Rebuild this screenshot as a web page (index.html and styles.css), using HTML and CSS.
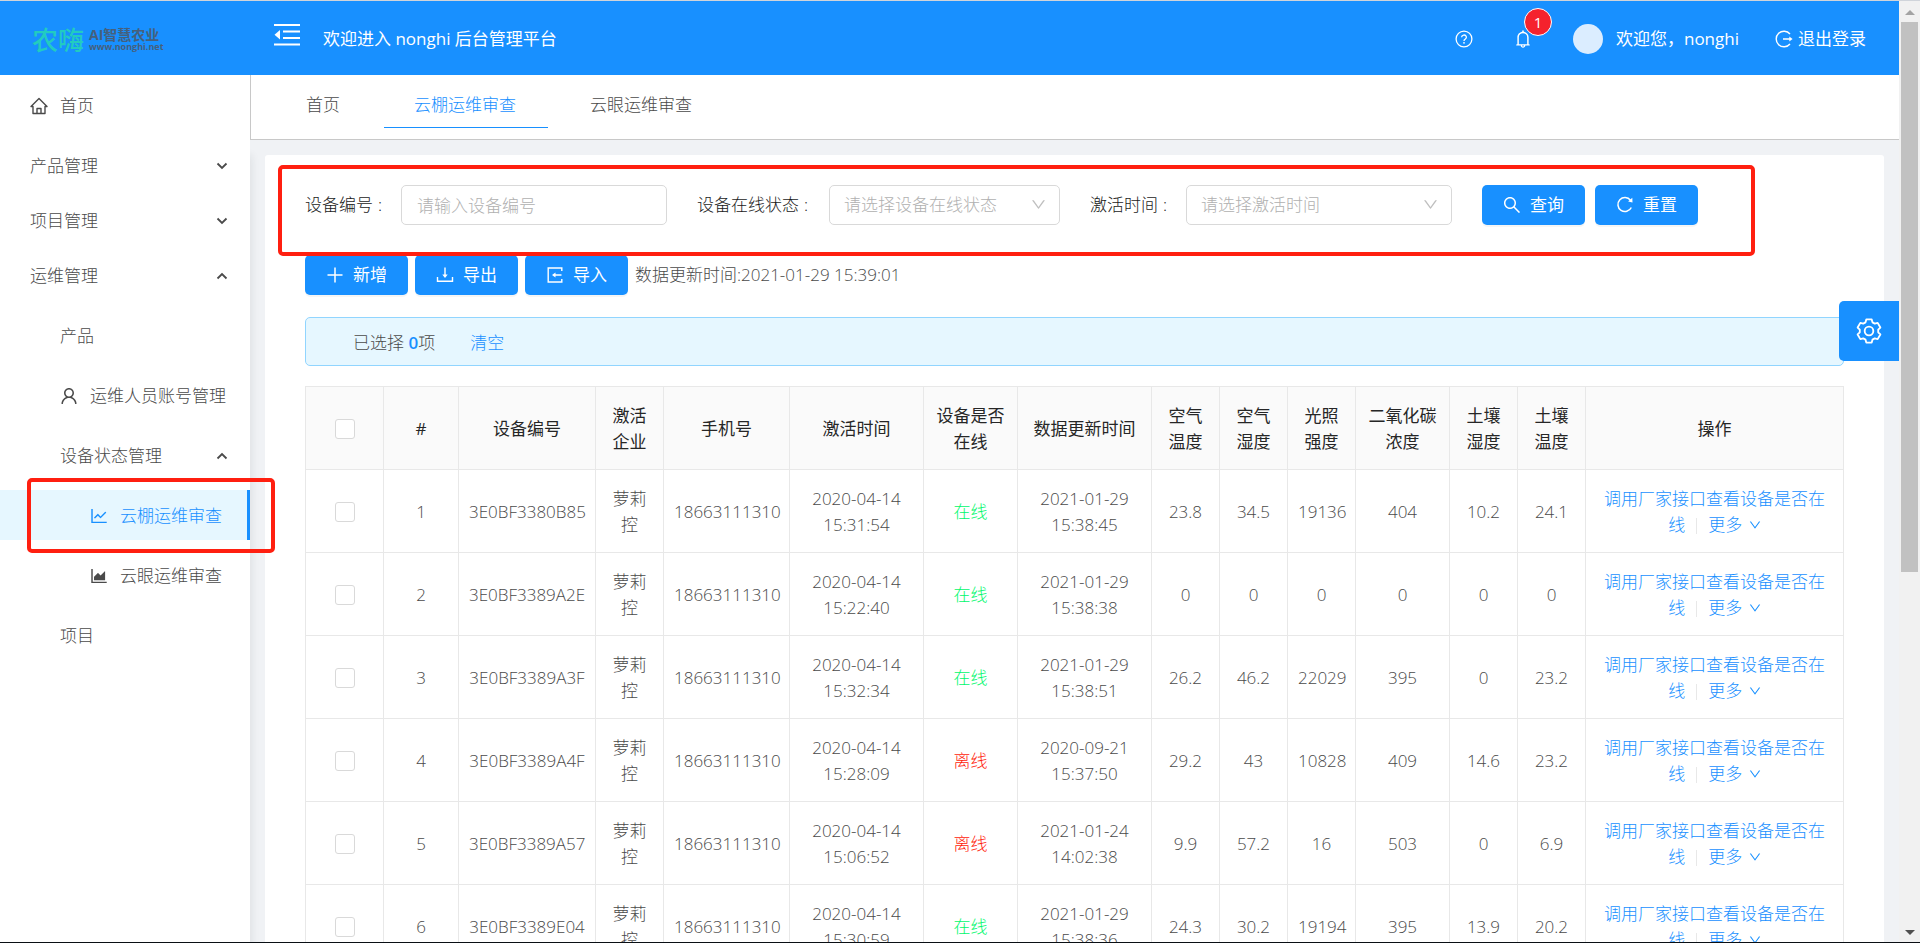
FILE: index.html
```html
<!DOCTYPE html>
<html lang="zh-CN">
<head>
  <meta charset="UTF-8" />
  <meta name="viewport" content="width=device-width, initial-scale=1.0">
  <title>云棚运维审查</title>
  <link rel="stylesheet" href="styles.css">
</head>
<body>
  <!-- 图标 -->
  <svg class="icon-defs" aria-hidden="true">
    <symbol id="i-down" viewBox="64 64 896 896"><path fill="currentColor" d="M884 256h-75c-5.100 0-9.900 2.500-12.900 6.600L512 654.200 227.900 262.600c-3-4.100-7.800-6.600-12.900-6.600h-75c-6.500 0-10.300 7.400-6.500 12.700l352.600 486.100c12.800 17.600 39 17.600 51.700 0l352.600-486.100c3.900-5.300.1-12.700-6.400-12.700z"/></symbol>
    <symbol id="i-arrow" viewBox="0 0 12 12"><path fill="none" stroke="currentColor" stroke-width="1.800" d="M1.500 3.500 6 8l4.500-4.500"/></symbol>
    <symbol id="i-home" viewBox="0 0 18 18"><path fill="none" stroke="currentColor" stroke-width="1.400" stroke-linejoin="round" d="M1 9.500 9 1.500l8 8h-2V16.500H3V9.500zM7 16.500v-5h4v5"/></symbol>
    <symbol id="i-user" viewBox="64 64 896 896"><path fill="currentColor" d="M858.500 763.600a374 374 0 0 0-80.600-119.500 375.630 375.630 0 0 0-119.500-80.600c-.4-.2-.8-.3-1.200-.5C719.500 518 760 444.700 760 362c0-137-111-248-248-248S264 225 264 362c0 82.700 40.500 156 102.800 201.100-.4.2-.8.3-1.200.5-44.800 18.900-85 46-119.500 80.600a375.630 375.630 0 0 0-80.600 119.500A371.700 371.700 0 0 0 136 901.800a8 8 0 0 0 8 8.200h60c4.400 0 7.900-3.500 8-7.800 2-77.200 33-149.500 87.800-204.300 56.700-56.700 132-87.900 212.200-87.900s155.500 31.200 212.200 87.900C779 752.700 810 825 812 902.200c.1 4.400 3.600 7.800 8 7.800h60a8 8 0 0 0 8-8.200c-1-47.800-10.900-94.300-29.500-138.200zM512 534c-45.900 0-89.100-17.900-121.600-50.400S340 407.900 340 362c0-45.900 17.900-89.100 50.400-121.600S466.100 190 512 190s89.100 17.900 121.600 50.400S684 316.100 684 362c0 45.900-17.900 89.100-50.400 121.600S557.900 534 512 534z"/></symbol>
    <symbol id="i-line" viewBox="64 64 896 896"><path fill="currentColor" d="M888 792H200V168c0-4.400-3.600-8-8-8h-56c-4.400 0-8 3.600-8 8v688c0 4.400 3.600 8 8 8h752c4.400 0 8-3.600 8-8v-56c0-4.400-3.600-8-8-8zM305.800 637.700c3.100 3.100 8.100 3.100 11.300 0l138.300-137.600L583 628.500c3.100 3.100 8.200 3.100 11.300 0l275.400-275.300c3.100-3.100 3.100-8.200 0-11.300l-39.600-39.600a8.030 8.030 0 0 0-11.300 0l-230 229.900L461.400 404a8.030 8.030 0 0 0-11.300 0L266.300 586.700a8.030 8.030 0 0 0 0 11.300l39.500 39.700z"/></symbol>
    <symbol id="i-area" viewBox="64 64 896 896"><path fill="currentColor" d="M888 792H200V168c0-4.400-3.600-8-8-8h-56c-4.400 0-8 3.600-8 8v688c0 4.400 3.600 8 8 8h752c4.400 0 8-3.600 8-8v-56c0-4.400-3.600-8-8-8zm-616-64h536c4.400 0 8-3.600 8-8V284c0-7.200-8.700-10.700-13.700-5.700L592 488.600l-125.400-124a8.030 8.030 0 0 0-11.300 0l-189 189.600a7.870 7.870 0 0 0-2.300 5.600V720c0 4.400 3.600 8 8 8z"/></symbol>
    <symbol id="i-search" viewBox="64 64 896 896"><path fill="currentColor" d="M909.600 854.500L649.900 594.800C690.200 542.700 712 479 712 412c0-80.200-31.300-155.400-87.900-212.100-56.600-56.700-132-87.900-212.100-87.900s-155.500 31.300-212.100 87.900C143.200 256.500 112 331.800 112 412c0 80.100 31.300 155.500 87.900 212.100C256.500 680.800 331.800 712 412 712c67 0 130.600-21.800 182.700-62l259.700 259.600a8.200 8.200 0 0 0 11.600 0l43.600-43.500a8.200 8.200 0 0 0 0-11.600zM570.400 570.400C528 612.700 471.800 636 412 636s-116-23.300-158.400-65.600C211.300 528 188 471.800 188 412s23.300-116.100 65.600-158.400C296 211.300 352.200 188 412 188s116.100 23.200 158.400 65.600S636 352.200 636 412s-23.300 116.100-65.600 158.400z"/></symbol>
    <symbol id="i-bell" viewBox="64 64 896 896"><path fill="currentColor" d="M816 768h-24V428c0-141.100-104.300-257.700-240-277.100V112c0-22.100-17.900-40-40-40s-40 17.900-40 40v38.900c-135.700 19.400-240 136-240 277.100v340h-24c-17.700 0-32 14.300-32 32v32c0 4.400 3.600 8 8 8h216c0 61.800 50.200 112 112 112s112-50.200 112-112h216c4.400 0 8-3.600 8-8v-32c0-17.700-14.300-32-32-32zM512 888c-26.500 0-48-21.500-48-48h96c0 26.500-21.500 48-48 48zM304 768V428c0-55.600 21.600-107.800 60.900-147.100S456.400 220 512 220c55.600 0 107.800 21.600 147.100 60.900S720 372.400 720 428v340H304z"/></symbol>
    <symbol id="i-reload" viewBox="0 0 18 18"><path fill="none" stroke="currentColor" stroke-width="1.500" d="M15.300 11.500A7 7 0 1 1 14.500 4.300"/><path fill="currentColor" d="m16.300 1.800.2 4.700-4.400-1z"/></symbol>
    <symbol id="i-plus" viewBox="0 0 18 18"><path fill="none" stroke="currentColor" stroke-width="1.500" d="M9 1.500v15M1.500 9h15"/></symbol>
    <symbol id="i-export" viewBox="0 0 18 18"><path fill="none" stroke="currentColor" stroke-width="1.400" d="M9 1.500V10M1.500 11v4.300h15V11"/><path fill="currentColor" d="M6.300 8.500h5.400L9 12z"/></symbol>
    <symbol id="i-import" viewBox="0 0 18 18"><path fill="none" stroke="currentColor" stroke-width="1.400" d="M15.800 5V2H2.200v14h13.600v-3M8.500 9h7"/><path fill="currentColor" d="M9.500 6.400v5.200L6 9z"/></symbol>
    <symbol id="i-help" viewBox="0 0 18 18"><circle cx="9" cy="9" r="7.900" fill="none" stroke="currentColor" stroke-width="1.300"/><path fill="none" stroke="currentColor" stroke-width="1.300" d="M6.600 7.200a2.400 2.200 0 1 1 3.600 1.900C9.300 9.500 9 9.900 9 11"/><circle cx="9" cy="12.800" r=".9" fill="currentColor"/></symbol>
    <symbol id="i-logout" viewBox="0 0 18 18"><path fill="none" stroke="currentColor" stroke-width="1.400" d="M15 4a7.800 7.800 0 1 0 0 10M8 9h8"/><path fill="currentColor" d="M14.300 6.600v4.800L17.600 9z"/></symbol>
    <symbol id="i-fold" viewBox="0 0 26 22"><path fill="currentColor" d="M0 0h26v2H0zM9 6.500h17v2H9zM9 13h17v2H9zM0 19.500h26v2H0zM6 6v9.500L.5 10.800z"/></symbol>
    <symbol id="i-gear" viewBox="0 0 24 24"><path fill="none" stroke="currentColor" stroke-width="1.700" stroke-linejoin="round" d="M9.500 1.300h5L15.200 4l2.100 1.200 2.700-.7 2.500 4.300-2 2v2.400l2 2-2.500 4.300-2.700-.7-2.100 1.200-.7 2.700h-5L8.800 20l-2.100-1.200-2.700.7-2.500-4.300 2-2v-2.400l-2-2L4 4.500l2.700.7L8.800 4z"/><circle cx="12" cy="12" r="4" fill="none" stroke="currentColor" stroke-width="1.700"/></symbol>
  </svg>

  <div class="page">
    <header class="header">
      <a class="logo" href="#">
        <span class="logo-mark">农嗨</span>
        <span class="logo-text">
          <span class="logo-name">AI智慧农业</span>
          <span class="logo-site">www.nonghi.net</span>
        </span>
      </a>
      <button class="fold" type="button" aria-label="收起菜单"><svg><use href="#i-fold"/></svg></button>
      <span class="welcome">欢迎进入 nonghi 后台管理平台</span>
      <div class="user-area">
        <a class="help" href="#" aria-label="帮助"><svg class="icon"><use href="#i-help"/></svg></a>
        <a class="bell" href="#" aria-label="通知"><svg class="icon"><use href="#i-bell"/></svg><span class="badge">1</span></a>
        <a class="account" href="#"><span class="avatar"></span>欢迎您，nonghi</a>
        <a class="logout" href="#"><svg class="icon"><use href="#i-logout"/></svg>退出登录</a>
      </div>
    </header>

    <div class="body">
      <!-- 左侧菜单 -->
      <nav class="sidebar">
        <ul class="menu">
          <li><a class="menu-item" href="#"><svg class="icon"><use href="#i-home"/></svg>首页</a></li>
          <li><button class="menu-title" type="button">产品管理<svg class="arrow"><use href="#i-arrow"/></svg></button></li>
          <li><button class="menu-title" type="button">项目管理<svg class="arrow"><use href="#i-arrow"/></svg></button></li>
          <li>
            <button class="menu-title open" type="button">运维管理<svg class="arrow"><use href="#i-arrow"/></svg></button>
            <ul class="menu-sub">
              <li><a class="menu-item" href="#">产品</a></li>
              <li><a class="menu-item" href="#"><svg class="icon"><use href="#i-user"/></svg>运维人员账号管理</a></li>
              <li>
                <button class="menu-title open" type="button">设备状态管理<svg class="arrow"><use href="#i-arrow"/></svg></button>
                <ul class="menu-sub-2">
                  <li><a class="menu-item selected" href="#"><svg class="icon"><use href="#i-line"/></svg>云棚运维审查</a></li>
                  <li><a class="menu-item" href="#"><svg class="icon"><use href="#i-area"/></svg>云眼运维审查</a></li>
                </ul>
              </li>
              <li><a class="menu-item" href="#">项目</a></li>
            </ul>
          </li>
        </ul>
        <div class="mark mark-menu"></div>
      </nav>

      <main class="main">
        <div class="tabs">
          <a class="tab" href="#">首页</a>
          <a class="tab active" href="#">云棚运维审查</a>
          <a class="tab" href="#">云眼运维审查</a>
        </div>

        <div class="card">
          <!-- 查询条件 -->
          <form class="filters">
            <div class="field">
              <label for="deviceNo">设备编号<span class="colon">:</span></label>
              <input id="deviceNo" class="control" type="text" placeholder="请输入设备编号">
            </div>
            <div class="field">
              <label class="wide" for="online">设备在线状态<span class="colon">:</span></label>
              <div class="select-box narrow">
                <select id="online" class="control"><option>请选择设备在线状态</option></select>
                <svg><use href="#i-down"/></svg>
              </div>
            </div>
            <div class="field">
              <label for="activeTime">激活时间<span class="colon">:</span></label>
              <div class="select-box">
                <select id="activeTime" class="control"><option>请选择激活时间</option></select>
                <svg><use href="#i-down"/></svg>
              </div>
            </div>
            <div class="field-buttons">
              <button class="btn" type="button"><svg class="icon"><use href="#i-search"/></svg>查询</button>
              <button class="btn" type="button"><svg class="icon"><use href="#i-reload"/></svg>重置</button>
            </div>
            <div class="mark mark-filters"></div>
          </form>

          <div class="toolbar">
            <button class="btn" type="button"><svg class="icon"><use href="#i-plus"/></svg>新增</button>
            <button class="btn" type="button"><svg class="icon"><use href="#i-export"/></svg>导出</button>
            <button class="btn" type="button"><svg class="icon"><use href="#i-import"/></svg>导入</button>
            <span>数据更新时间:2021-01-29 15:39:01</span>
          </div>

          <div class="alert">
            <span>已选择 <b>0</b>项</span>
            <a href="#">清空</a>
          </div>

          <table class="table">
            <colgroup>
              <col class="c-check"><col class="c-index"><col class="c-no"><col class="c-small"><col class="c-phone">
              <col class="c-time"><col class="c-mid"><col class="c-time"><col class="c-small"><col class="c-small">
              <col class="c-small"><col class="c-mid"><col class="c-small"><col class="c-small"><col>
            </colgroup>
            <thead>
              <tr>
                <th><input type="checkbox" aria-label="全选"></th>
                <th>#</th>
                <th>设备编号</th>
                <th>激活企业</th>
                <th>手机号</th>
                <th>激活时间</th>
                <th>设备是否在线</th>
                <th>数据更新时间</th>
                <th>空气温度</th>
                <th>空气湿度</th>
                <th>光照强度</th>
                <th>二氧化碳浓度</th>
                <th>土壤湿度</th>
                <th>土壤温度</th>
                <th>操作</th>
              </tr>
            </thead>
            <tbody>
              <tr>
                <td><input type="checkbox" aria-label="选择 1"></td>
                <td>1</td><td>3E0BF3380B85</td><td>萝莉控</td><td>18663111310</td><td>2020-04-14 15:31:54</td>
                <td class="online">在线</td><td>2021-01-29 15:38:45</td>
                <td>23.8</td><td>34.5</td><td>19136</td><td>404</td><td>10.2</td><td>24.1</td>
                <td><a href="#">调用厂家接口查看设备是否在线</a><i class="divider"></i><a href="#">更多 <svg><use href="#i-down"/></svg></a></td>
              </tr>
              <tr>
                <td><input type="checkbox" aria-label="选择 2"></td>
                <td>2</td><td>3E0BF3389A2E</td><td>萝莉控</td><td>18663111310</td><td>2020-04-14 15:22:40</td>
                <td class="online">在线</td><td>2021-01-29 15:38:38</td>
                <td>0</td><td>0</td><td>0</td><td>0</td><td>0</td><td>0</td>
                <td><a href="#">调用厂家接口查看设备是否在线</a><i class="divider"></i><a href="#">更多 <svg><use href="#i-down"/></svg></a></td>
              </tr>
              <tr>
                <td><input type="checkbox" aria-label="选择 3"></td>
                <td>3</td><td>3E0BF3389A3F</td><td>萝莉控</td><td>18663111310</td><td>2020-04-14 15:32:34</td>
                <td class="online">在线</td><td>2021-01-29 15:38:51</td>
                <td>26.2</td><td>46.2</td><td>22029</td><td>395</td><td>0</td><td>23.2</td>
                <td><a href="#">调用厂家接口查看设备是否在线</a><i class="divider"></i><a href="#">更多 <svg><use href="#i-down"/></svg></a></td>
              </tr>
              <tr>
                <td><input type="checkbox" aria-label="选择 4"></td>
                <td>4</td><td>3E0BF3389A4F</td><td>萝莉控</td><td>18663111310</td><td>2020-04-14 15:28:09</td>
                <td class="offline">离线</td><td>2020-09-21 15:37:50</td>
                <td>29.2</td><td>43</td><td>10828</td><td>409</td><td>14.6</td><td>23.2</td>
                <td><a href="#">调用厂家接口查看设备是否在线</a><i class="divider"></i><a href="#">更多 <svg><use href="#i-down"/></svg></a></td>
              </tr>
              <tr>
                <td><input type="checkbox" aria-label="选择 5"></td>
                <td>5</td><td>3E0BF3389A57</td><td>萝莉控</td><td>18663111310</td><td>2020-04-14 15:06:52</td>
                <td class="offline">离线</td><td>2021-01-24 14:02:38</td>
                <td>9.9</td><td>57.2</td><td>16</td><td>503</td><td>0</td><td>6.9</td>
                <td><a href="#">调用厂家接口查看设备是否在线</a><i class="divider"></i><a href="#">更多 <svg><use href="#i-down"/></svg></a></td>
              </tr>
              <tr>
                <td><input type="checkbox" aria-label="选择 6"></td>
                <td>6</td><td>3E0BF3389E04</td><td>萝莉控</td><td>18663111310</td><td>2020-04-14 15:30:59</td>
                <td class="online">在线</td><td>2021-01-29 15:38:36</td>
                <td>24.3</td><td>30.2</td><td>19194</td><td>395</td><td>13.9</td><td>20.2</td>
                <td><a href="#">调用厂家接口查看设备是否在线</a><i class="divider"></i><a href="#">更多 <svg><use href="#i-down"/></svg></a></td>
              </tr>
            </tbody>
          </table>
        </div>
      </main>
    </div>

    <button class="setting" type="button" aria-label="设置"><svg><use href="#i-gear"/></svg></button>
  </div>

  <!-- 滚动条 -->
  <div class="scrollbar">
    <span class="scroll-up"></span>
    <div class="scroll-track"><div class="scroll-thumb"></div></div>
    <span class="scroll-down"></span>
  </div>
</body>
</html>
```

FILE: styles.css
```css
* {
  box-sizing: border-box;
}
body {
  margin: 0;
  height: 100vh;
  display: flex;
  overflow: hidden;
  border-top: 1px solid #d0d4da;
  border-bottom: 1px solid #0a0f14;
  color: #4a4a4a;
  font-family: "Open Sans", "Noto Sans CJK SC", sans-serif;
  font-size: 17px;
  font-weight: 300;
  line-height: 26px;
}
ul {
  margin: 0;
  padding: 0;
  list-style: none;
}
a {
  color: #1890ff;
  text-decoration: none;
}
button, input, select {
  font: inherit;
}
button {
  border: 0;
  cursor: pointer;
}
.icon-defs {
  position: absolute;
  width: 0;
  height: 0;
}
.icon {
  width: 18px;
  height: 18px;
  flex: none;
}
.page {
  position: relative;
  flex: 1;
  min-width: 0;
  display: flex;
  flex-direction: column;
}
/* 顶部 */
.header {
  flex: none;
  display: flex;
  align-items: center;
  height: 74px;
  padding: 2px 33px 0 0;
  background: #1890ff;
  color: #fff;
  font-weight: 400;
}
.header a {
  color: #fff;
}
.logo {
  display: flex;
  align-items: center;
  gap: 5px;
  width: 274px;
  padding: 2px 0 0 32px;
}
.logo .logo-mark {
  color: #22cbc0;
  font-size: 26px;
  font-weight: 500;
}
.logo-text {
  display: flex;
  flex-direction: column;
  color: #46607c;
  font-weight: 700;
}
.logo-name {
  font-size: 14px;
  line-height: 14px;
}
.logo-site {
  font-size: 9px;
  line-height: 10px;
}
.fold {
  padding: 0;
  margin-bottom: 8px;
  background: none;
  color: #fff;
}
.fold svg {
  display: block;
  width: 26px;
  height: 22px;
}
.welcome {
  margin-left: 23px;
}
.user-area {
  display: flex;
  align-items: center;
  margin-left: auto;
}
.user-area a {
  display: flex;
  align-items: center;
}
.bell {
  position: relative;
  margin-left: 41px;
}
.badge {
  position: absolute;
  left: 10px;
  top: -22px;
  width: 28px;
  height: 28px;
  border: 1px solid #fff;
  border-radius: 50%;
  background: #f5222d;
  font-size: 15px;
  text-align: center;
}
.account {
  margin-left: 41px;
  gap: 13px;
}
.avatar {
  width: 30px;
  height: 30px;
  border-radius: 50%;
  background: #dbedff;
}
.logout {
  margin-left: 36px;
  gap: 5px;
}
/* 左侧菜单 */
.body {
  flex: 1;
  min-height: 0;
  display: flex;
}
.sidebar {
  position: relative;
  z-index: 1;
  flex: none;
  width: 250px;
  background: #fff;
  box-shadow: 2px 80px 8px rgba(29, 35, 41, 0.08);
}
.menu {
  padding-top: 5px;
}
.menu > li:first-child > a {
  margin-top: 0;
}
.menu-item, .menu-title {
  display: flex;
  align-items: center;
  width: 100%;
  height: 50px;
  padding: 2px 22px 0 30px;
  color: #4a4a4a;
  white-space: nowrap;
}
.menu-item {
  gap: 12px;
  margin: 10px 0;
  padding-right: 0;
}
.menu-title {
  justify-content: space-between;
  margin: 5px 0;
  background: none;
}
.menu-sub .menu-item, .menu-sub .menu-title {
  padding-left: 60px;
}
.menu-sub-2 .menu-item.menu-item {
  padding-left: 90px;
}
.menu-item.selected {
  background: #e6f7ff;
  border-right: 3px solid #1890ff;
  color: #1890ff;
}
.arrow {
  width: 12px;
  height: 12px;
}
.open .arrow {
  transform: rotate(180deg);
}
/* 红色标注框 */
.mark {
  position: absolute;
  border: 4px solid #ff1f10;
  border-radius: 5px;
  pointer-events: none;
}
.mark-menu {
  left: 27px;
  right: -25px;
  top: 403px;
  height: 75px;
}
.mark-filters {
  left: -27px;
  top: -20px;
  width: 1477px;
  height: 91px;
}
/* 标签页 */
.main {
  flex: 1;
  min-width: 0;
  overflow: hidden;
  background: #f0f2f5;
}
.tabs {
  position: relative;
  z-index: 2;
  display: flex;
  gap: 12px;
  height: 65px;
  padding-left: 25px;
  border-left: 1px solid #c8c8c8;
  border-bottom: 1px solid #c8c8c8;
  background: #fff;
}
.tab {
  height: 53px;
  padding: 17px 32px 0 30px;
  color: #4a4a4a;
}
.tab.active {
  border-bottom: 1px solid #1890ff;
  color: #1890ff;
}
.card {
  margin: 15px 15px 0;
  padding: 30px 40px;
  border-radius: 3px;
  background: #fff;
}
/* 查询条件 */
.filters {
  position: relative;
  display: flex;
  gap: 30px;
}
.field {
  display: flex;
  align-items: center;
}
.field label {
  width: 96px;
  color: #1a1a1a;
  white-space: nowrap;
}
.field .wide {
  width: 132px;
}
.colon {
  margin-left: 5px;
}
.control {
  width: 266px;
  height: 40px;
  padding: 0 15px;
  border: 1px solid #d9d9d9;
  border-radius: 5px;
  background: #fff;
  color: #b0b0b0;
}
.control::placeholder {
  color: #b0b0b0;
}
.select-box {
  position: relative;
}
select.control {
  display: block;
  appearance: none;
  padding: 0 36px 0 14px;
}
.narrow .control {
  width: 231px;
}
.select-box svg {
  position: absolute;
  right: 14px;
  top: 12px;
  width: 15px;
  height: 15px;
  color: #bfbfbf;
  pointer-events: none;
}
.field-buttons, .toolbar {
  display: flex;
  align-items: center;
  gap: 10px;
}
.btn {
  display: flex;
  align-items: center;
  justify-content: center;
  gap: 9px;
  width: 103px;
  height: 40px;
  padding: 0;
  border-radius: 5px;
  background: #1890ff;
  box-shadow: 0 2px 0 rgba(0, 0, 0, 0.04);
  color: #fff;
  font-weight: 400;
}
.toolbar {
  gap: 7px;
  margin-top: 30px;
}
.alert {
  display: flex;
  gap: 35px;
  margin-top: 22px;
  padding: 12px 47px 9px;
  border: 1px solid #91d5ff;
  border-radius: 5px;
  background: #e6f7ff;
}
.alert b {
  color: #1890ff;
  font-weight: 600;
}
/* 表格 */
.table {
  width: 100%;
  margin-top: 20px;
  table-layout: fixed;
  border-collapse: collapse;
}
.c-check { width: 78px; }
.c-index { width: 75px; }
.c-no { width: 137px; }
.c-small { width: 68px; }
.c-phone { width: 126px; }
.c-time { width: 134px; }
.c-mid { width: 94px; }
.table th, .table td {
  height: 83px;
  padding: 16px 10px 14px;
  border: 1px solid #e8e8e8;
  text-align: center;
}
.table th {
  background: #fafafa;
  color: #262626;
  font-weight: 400;
}
.table input {
  appearance: none;
  display: block;
  width: 20px;
  height: 20px;
  margin: 0 auto;
  border: 1px solid #d9d9d9;
  border-radius: 3px;
  background: #fff;
}
.table .online {
  color: #00f76c;
}
.table .offline {
  color: #ff1a0a;
}
.table svg {
  width: 12px;
  height: 12px;
  margin-left: 2px;
}
.divider {
  display: inline-block;
  width: 1px;
  height: 16px;
  margin: 0 11px;
  background: #e8e8e8;
  vertical-align: middle;
}
.setting {
  position: absolute;
  z-index: 3;
  right: 0;
  top: 300px;
  width: 60px;
  height: 60px;
  padding: 0;
  border-radius: 5px 0 0 5px;
  background: #1890ff;
  color: #fff;
}
.setting svg {
  display: block;
  width: 26px;
  height: 26px;
  margin: 0 auto;
}
/* 滚动条 */
.scrollbar {
  flex: none;
  display: flex;
  flex-direction: column;
  align-items: center;
  width: 21px;
  padding: 9px 0 7px;
  background: #f1f1f1;
}
.scroll-up, .scroll-down {
  border: 5px solid transparent;
}
.scroll-up {
  border-top: 0;
  border-bottom-color: #a3a3a3;
}
.scroll-down {
  border-bottom: 0;
  border-top-color: #505050;
}
.scroll-track {
  flex: 1;
  width: 17px;
  padding: 7px 0;
}
.scroll-thumb {
  height: 61%;
  background: #c1c1c1;
}
```
